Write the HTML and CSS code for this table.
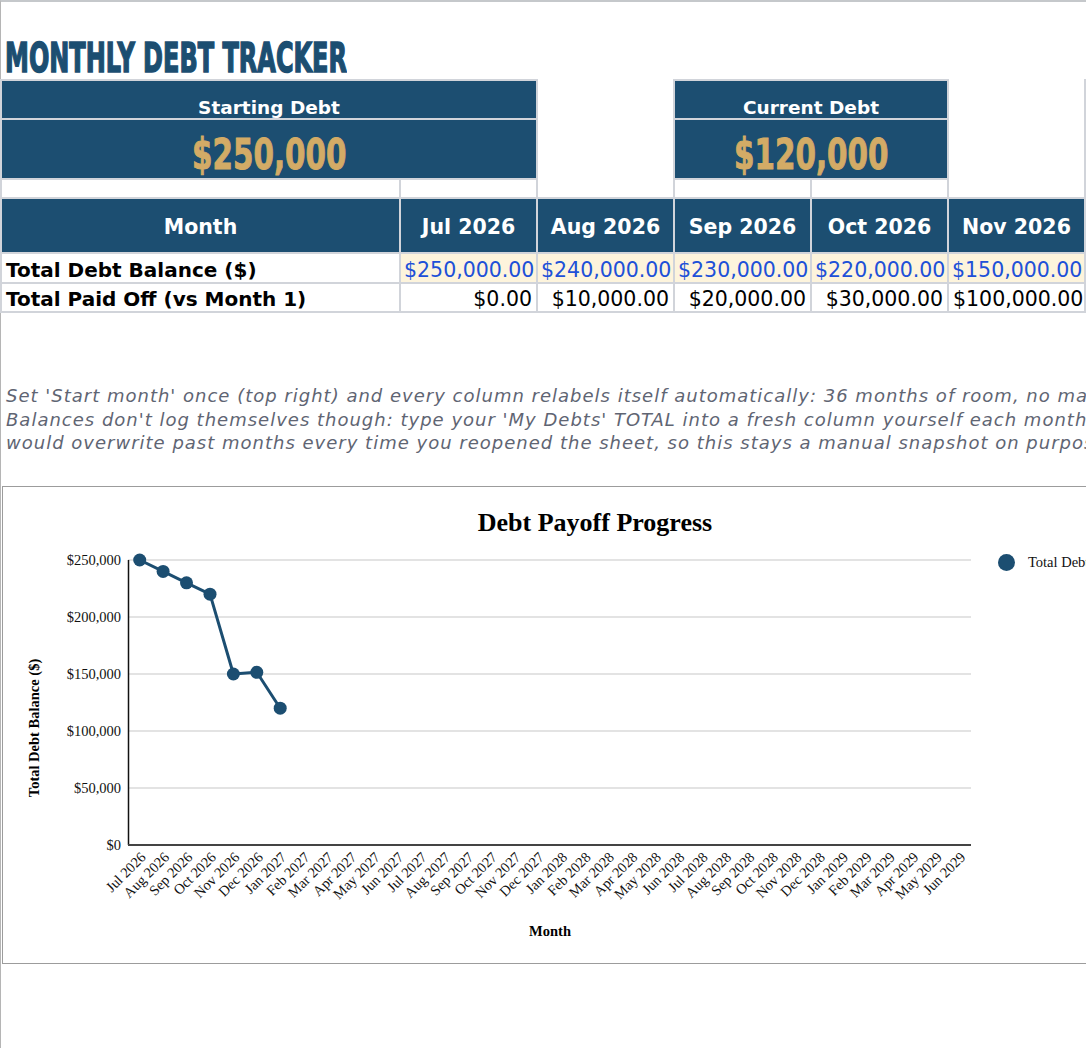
FILE: index.html
```html
<!DOCTYPE html>
<html lang="en">
<head>
<meta charset="utf-8">
<title>Monthly Debt Tracker</title>
<link rel="stylesheet" href="styles.css">
</head>
<body>
<div class="sheet">
  <h1 class="title"><span class="title-text">MONTHLY DEBT TRACKER</span></h1>

  <table class="grid">
    <colgroup>
      <col class="col-label">
      <col class="col-month"><col class="col-month"><col class="col-month">
      <col class="col-month"><col class="col-month"><col class="col-month">
    </colgroup>
    <tbody>
      <tr class="row-card-label">
        <td class="card card-label" colspan="2">Starting Debt</td>
        <td class="open"></td>
        <td class="card card-label" colspan="2">Current Debt</td>
        <td class="open"></td>
        <td class="card card-label"></td>
      </tr>
      <tr class="row-card-value">
        <td class="card card-value" colspan="2"><span class="big">$250,000</span></td>
        <td class="open"></td>
        <td class="card card-value" colspan="2"><span class="big">$120,000</span></td>
        <td class="open"></td>
        <td class="card card-value"></td>
      </tr>
      <tr class="row-spacer">
        <td class="boxed"></td><td class="boxed"></td><td class="open"></td>
        <td class="boxed"></td><td class="boxed"></td><td class="open"></td><td class="boxed"></td>
      </tr>
      <tr class="row-head">
        <th>Month</th><th>Jul 2026</th><th>Aug 2026</th><th>Sep 2026</th><th>Oct 2026</th><th>Nov 2026</th><th></th>
      </tr>
      <tr class="row-data">
        <th class="row-label">Total Debt Balance ($)</th>
        <td class="input">$250,000.00</td><td class="input">$240,000.00</td><td class="input">$230,000.00</td>
        <td class="input">$220,000.00</td><td class="input">$150,000.00</td><td class="input"></td>
      </tr>
      <tr class="row-data">
        <th class="row-label">Total Paid Off (vs Month 1)</th>
        <td class="num">$0.00</td><td class="num">$10,000.00</td><td class="num">$20,000.00</td>
        <td class="num">$30,000.00</td><td class="num">$100,000.00</td><td class="num"></td>
      </tr>
    </tbody>
  </table>

  <div class="note">
    <p>Set 'Start month' once (top right) and every column relabels itself automatically: 36 months of room, no manual date edits needed.</p>
    <p>Balances don't log themselves though: type your 'My Debts' TOTAL into a fresh column yourself each month. A live formula</p>
    <p>would overwrite past months every time you reopened the sheet, so this stays a manual snapshot on purpose.</p>
  </div>

  <div class="chart">
    <svg class="chart-svg" width="1100" height="476" viewBox="2 486 1100 476" xmlns="http://www.w3.org/2000/svg">
      <text class="c-title" x="594" y="530" text-anchor="middle">Debt Payoff Progress</text>

      <g class="c-grid">
        <line x1="127" y1="559" x2="970" y2="559"/>
        <line x1="127" y1="616" x2="970" y2="616"/>
        <line x1="127" y1="673" x2="970" y2="673"/>
        <line x1="127" y1="730" x2="970" y2="730"/>
        <line x1="127" y1="787" x2="970" y2="787"/>
      </g>
      <line class="c-axis-y" x1="127.5" y1="559" x2="127.5" y2="844"/>
      <line class="c-axis-x" x1="127" y1="844" x2="970" y2="844"/>

      <g class="c-ylab">
        <text x="120" y="564" text-anchor="end">$250,000</text>
        <text x="120" y="621" text-anchor="end">$200,000</text>
        <text x="120" y="678" text-anchor="end">$150,000</text>
        <text x="120" y="735" text-anchor="end">$100,000</text>
        <text x="120" y="792" text-anchor="end">$50,000</text>
        <text x="120" y="849" text-anchor="end">$0</text>
      </g>

      <text class="c-axtitle" x="38" y="727" text-anchor="middle" transform="rotate(-90 38 727)">Total Debt Balance ($)</text>
      <text class="c-axtitle" x="549" y="935" text-anchor="middle">Month</text>

      <g class="c-xlab">
        <text x="145.7" y="857" transform="rotate(-45 145.7 857)" text-anchor="end">Jul 2026</text>
        <text x="169.1" y="857" transform="rotate(-45 169.1 857)" text-anchor="end">Aug 2026</text>
        <text x="192.5" y="857" transform="rotate(-45 192.5 857)" text-anchor="end">Sep 2026</text>
        <text x="216.0" y="857" transform="rotate(-45 216.0 857)" text-anchor="end">Oct 2026</text>
        <text x="239.4" y="857" transform="rotate(-45 239.4 857)" text-anchor="end">Nov 2026</text>
        <text x="262.8" y="857" transform="rotate(-45 262.8 857)" text-anchor="end">Dec 2026</text>
        <text x="286.2" y="857" transform="rotate(-45 286.2 857)" text-anchor="end">Jan 2027</text>
        <text x="309.6" y="857" transform="rotate(-45 309.6 857)" text-anchor="end">Feb 2027</text>
        <text x="333.0" y="857" transform="rotate(-45 333.0 857)" text-anchor="end">Mar 2027</text>
        <text x="356.5" y="857" transform="rotate(-45 356.5 857)" text-anchor="end">Apr 2027</text>
        <text x="379.9" y="857" transform="rotate(-45 379.9 857)" text-anchor="end">May 2027</text>
        <text x="403.3" y="857" transform="rotate(-45 403.3 857)" text-anchor="end">Jun 2027</text>
        <text x="426.7" y="857" transform="rotate(-45 426.7 857)" text-anchor="end">Jul 2027</text>
        <text x="450.1" y="857" transform="rotate(-45 450.1 857)" text-anchor="end">Aug 2027</text>
        <text x="473.5" y="857" transform="rotate(-45 473.5 857)" text-anchor="end">Sep 2027</text>
        <text x="497.0" y="857" transform="rotate(-45 497.0 857)" text-anchor="end">Oct 2027</text>
        <text x="520.4" y="857" transform="rotate(-45 520.4 857)" text-anchor="end">Nov 2027</text>
        <text x="543.8" y="857" transform="rotate(-45 543.8 857)" text-anchor="end">Dec 2027</text>
        <text x="567.2" y="857" transform="rotate(-45 567.2 857)" text-anchor="end">Jan 2028</text>
        <text x="590.6" y="857" transform="rotate(-45 590.6 857)" text-anchor="end">Feb 2028</text>
        <text x="614.0" y="857" transform="rotate(-45 614.0 857)" text-anchor="end">Mar 2028</text>
        <text x="637.5" y="857" transform="rotate(-45 637.5 857)" text-anchor="end">Apr 2028</text>
        <text x="660.9" y="857" transform="rotate(-45 660.9 857)" text-anchor="end">May 2028</text>
        <text x="684.3" y="857" transform="rotate(-45 684.3 857)" text-anchor="end">Jun 2028</text>
        <text x="707.7" y="857" transform="rotate(-45 707.7 857)" text-anchor="end">Jul 2028</text>
        <text x="731.1" y="857" transform="rotate(-45 731.1 857)" text-anchor="end">Aug 2028</text>
        <text x="754.5" y="857" transform="rotate(-45 754.5 857)" text-anchor="end">Sep 2028</text>
        <text x="778.0" y="857" transform="rotate(-45 778.0 857)" text-anchor="end">Oct 2028</text>
        <text x="801.4" y="857" transform="rotate(-45 801.4 857)" text-anchor="end">Nov 2028</text>
        <text x="824.8" y="857" transform="rotate(-45 824.8 857)" text-anchor="end">Dec 2028</text>
        <text x="848.2" y="857" transform="rotate(-45 848.2 857)" text-anchor="end">Jan 2029</text>
        <text x="871.6" y="857" transform="rotate(-45 871.6 857)" text-anchor="end">Feb 2029</text>
        <text x="895.0" y="857" transform="rotate(-45 895.0 857)" text-anchor="end">Mar 2029</text>
        <text x="918.5" y="857" transform="rotate(-45 918.5 857)" text-anchor="end">Apr 2029</text>
        <text x="941.9" y="857" transform="rotate(-45 941.9 857)" text-anchor="end">May 2029</text>
        <text x="965.3" y="857" transform="rotate(-45 965.3 857)" text-anchor="end">Jun 2029</text>
      </g>

      <polyline class="c-line" points="138.7,559 162.1,570.4 185.5,581.8 209.0,593.2 232.4,673 255.8,671.3 279.2,707.2"/>
      <g class="c-dots">
        <circle cx="138.7" cy="559" r="6.5"/>
        <circle cx="162.1" cy="570.4" r="6.5"/>
        <circle cx="185.5" cy="581.8" r="6.5"/>
        <circle cx="209.0" cy="593.2" r="6.5"/>
        <circle cx="232.4" cy="673" r="6.5"/>
        <circle cx="255.8" cy="671.3" r="6.5"/>
        <circle cx="279.2" cy="707.2" r="6.5"/>
      </g>

      <circle class="c-legend-dot" cx="1005.5" cy="561.5" r="8.5"/>
      <text class="c-legend" x="1027" y="566">Total Debt Balance ($)</text>
    </svg>
  </div>
</div>
</body>
</html>
```

FILE: styles.css
```css
* { box-sizing: border-box; }

html, body {
  margin: 0;
  padding: 0;
  background: #ffffff;
}

body {
  width: 1086px;
  height: 1048px;
  overflow: hidden;
  font-family: "DejaVu Sans", "Noto Sans", sans-serif;
  color: #000;
}

.sheet {
  height: 1048px;
  border-top: 2px solid #c5c8cb;
  border-left: 1px solid #b5b5b5;
}

/* ---------- title ---------- */
.title {
  margin: 0;
  height: 77px;
  padding: 36px 0 1px 4px;
  font: bold 40px/40px "DejaVu Sans", sans-serif;
  color: #1c4e71;
  white-space: nowrap;
}

.title-text {
  display: inline-block;
  transform: scaleX(0.6);
  transform-origin: 0 50%;
  -webkit-text-stroke: 1.6px #1c4e71;
}

/* ---------- sheet grid ---------- */
.grid {
  border-collapse: collapse;
  table-layout: fixed;
  width: 1220px;
  margin-left: -1px;
}

.col-label { width: 399px; }
.col-month { width: 137px; }

.grid td,
.grid th {
  padding: 0;
  border: 2px solid #d1d4da;
  white-space: nowrap;
  overflow: hidden;
}

.grid .open { border: none; }

.row-card-label td { height: 39px; }
.row-card-value td { height: 60px; }
.row-spacer td { height: 19px; }
.row-head th { height: 55px; }
.row-data th,
.row-data td { height: 30px; }
.row-data + .row-data th,
.row-data + .row-data td { height: 29px; }

.grid .card {
  background: #1c4e71;
  text-align: center;
  vertical-align: bottom;
}

.grid .card-label {
  color: #ffffff;
  font-weight: bold;
  font-size: 18.5px;
  line-height: 20px;
  padding-bottom: 0;
}

.grid .card-value {
  padding-bottom: 2px;
}

.big {
  display: inline-block;
  font-weight: bold;
  font-size: 42px;
  line-height: 42px;
  color: #d3ab66;
  transform: scaleX(0.7);
  -webkit-text-stroke: 1px #d3ab66;
}

.grid .row-head th {
  background: #1c4e71;
  color: #ffffff;
  font-weight: bold;
  font-size: 20.5px;
  line-height: 24px;
  text-align: center;
  vertical-align: middle;
  padding-top: 2px;
}

.grid .row-data th,
.grid .row-data td {
  font-size: 20.5px;
  line-height: 24px;
  vertical-align: bottom;
}

.grid .row-data .row-label {
  text-align: left;
  font-weight: bold;
  font-size: 20px;
  padding-left: 4px;
}

.grid .input {
  background: #fdf4dc;
  color: #2050d8;
  text-align: right;
  padding: 0 4px 0 3px;
}

.grid .num {
  color: #000;
  text-align: right;
  padding: 0 4px;
}

/* ---------- note ---------- */
.note {
  margin-top: 71px;
  padding-left: 5px;
  font-style: italic;
  font-size: 18px;
  line-height: 23.5px;
  letter-spacing: 1px;
  color: #5f6573;
  white-space: nowrap;
}

.note p { margin: 0; }

/* ---------- chart ---------- */
.chart {
  margin: 31px 0 0 1px;
  width: 1100px;
  height: 478px;
  border: 1px solid #9c9c9c;
  background: #fff;
}

.chart-svg { display: block; }

.c-title {
  font: bold 26px "Liberation Serif", serif;
  fill: #000;
}

.c-grid line {
  stroke: #dadada;
  stroke-width: 1.5;
}

.c-axis-y {
  stroke: #111;
  stroke-width: 1.5;
}

.c-axis-x {
  stroke: #444;
  stroke-width: 2;
}

.c-ylab text,
.c-xlab text,
.c-legend {
  font: 14.5px "Liberation Serif", serif;
  fill: #111;
}

.c-axtitle {
  font: bold 14.5px "Liberation Serif", serif;
  fill: #000;
}

.c-line {
  fill: none;
  stroke: #1c4e71;
  stroke-width: 3;
  stroke-linejoin: round;
}

.c-dots circle,
.c-legend-dot {
  fill: #1c4e71;
}
```
